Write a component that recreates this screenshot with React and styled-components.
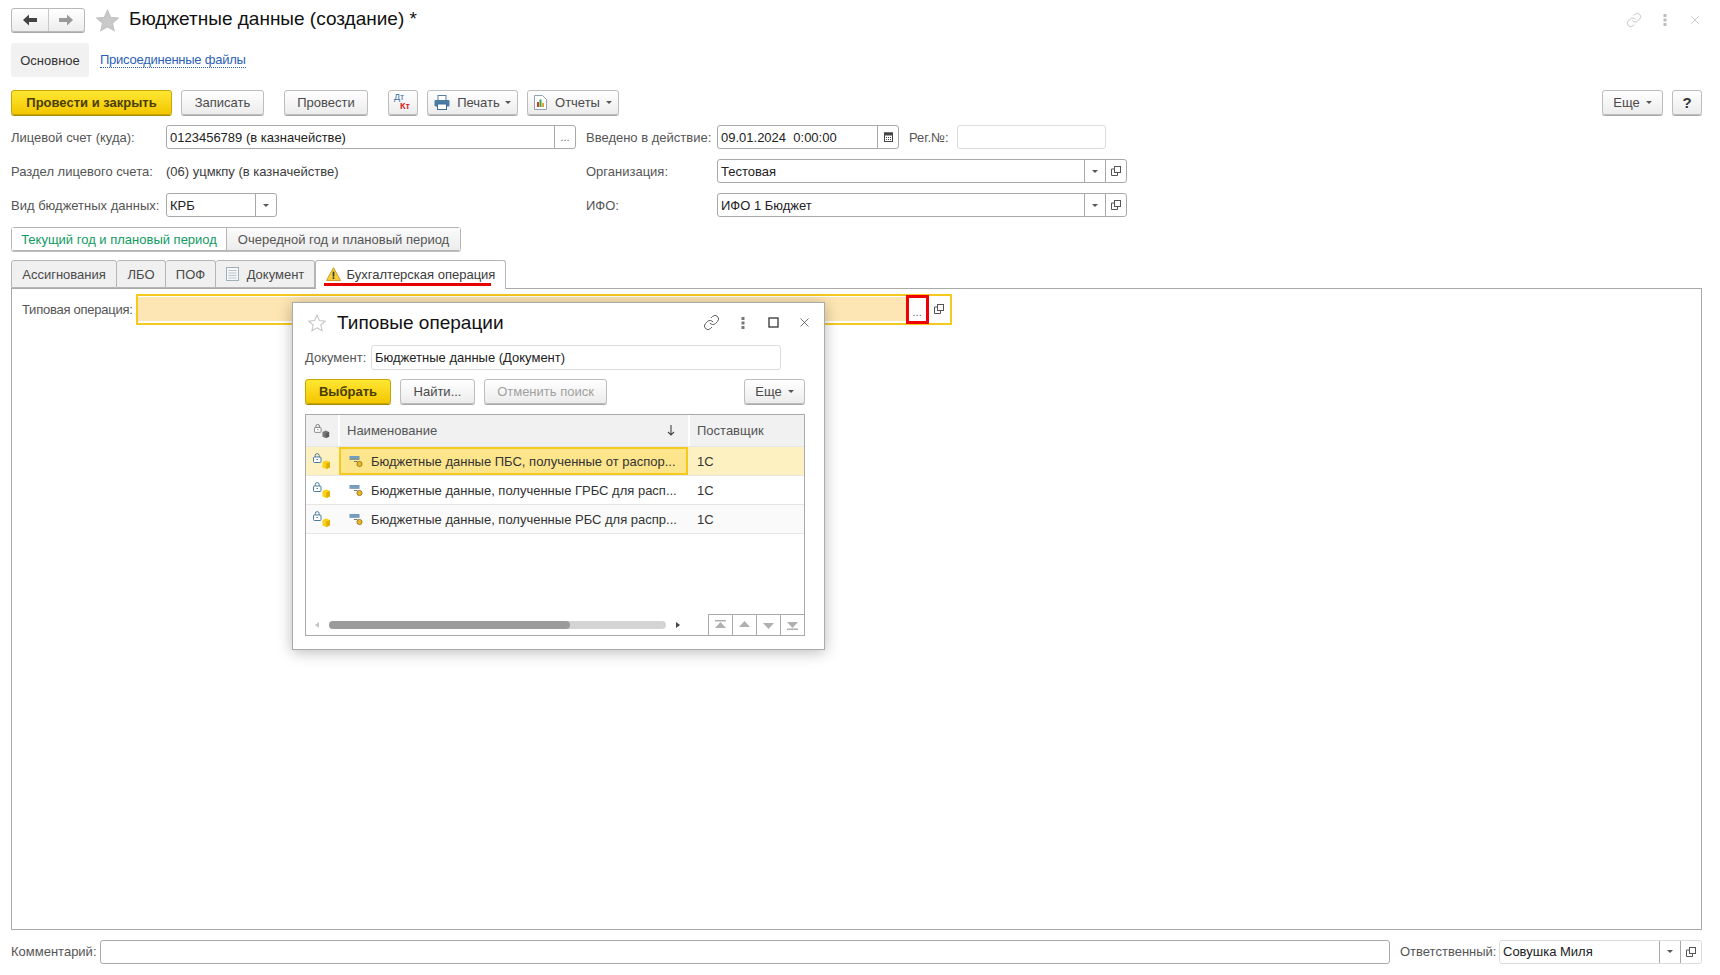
import React from 'react';
import styled, { createGlobalStyle } from 'styled-components';
import { Link as LinkIcon, X } from 'lucide-react';

const GlobalStyle = createGlobalStyle`
  html, body { margin: 0; padding: 0; background: #fff; }
  body {
    font-family: "Liberation Sans", Arial, sans-serif;
    font-size: 13px;
    color: #4a4a4a;
  }
  * { box-sizing: border-box; }
`;

const Page = styled.div`
  width: 1720px;
  height: 975px;
  padding: 8px 18px 0 11px;
  display: flex;
  flex-direction: column;
  overflow: hidden;
`;

const Header = styled.div`
  display: flex;
  align-items: center;
  height: 24px;
`;

const NavGroup = styled.div`
  display: flex;
  width: 74px;
  height: 24px;
  margin-right: 11px;
  border: 1px solid #b9b9b9;
  border-radius: 3px;
  box-shadow: 0 1px 0 #a8a8a8;
  background: linear-gradient(#fff, #ededed);
`;

const NavBtn = styled.div`
  flex: 1;
  display: flex;
  align-items: center;
  justify-content: center;
  & + & { border-left: 1px solid #c8c8c8; }
`;

const Title = styled.div`
  margin-left: 10px;
  padding-bottom: 2px;
  font-size: 19px;
  color: #111;
  white-space: nowrap;
`;

const HeaderTools = styled.div`
  margin-left: auto;
  display: flex;
  align-items: center;
  gap: 21px;
  color: #b8b8b8;
`;

const SectionRow = styled.div`
  display: flex;
  align-items: center;
  margin-top: 11px;
  height: 34px;
`;

const SectionActive = styled.div`
  width: 78px;
  height: 34px;
  display: flex;
  align-items: center;
  justify-content: center;
  background: #f1f1f1;
  border-radius: 3px;
  color: #333;
`;

const SectionLink = styled.a`
  margin-left: 11px;
  color: #2b5fb8;
  border-bottom: 1px dotted #2b5fb8;
  line-height: 14px;
  letter-spacing: -0.25px;
`;

const Toolbar = styled.div`
  display: flex;
  align-items: center;
  margin-top: ${p => p.$mt || 12}px;
  height: 26px;
`;

const Btn = styled.div`
  flex: none;
  width: ${p => p.$w}px;
  height: 25px;
  margin-left: ${p => p.$ml || 0}px;
  display: flex;
  align-items: center;
  justify-content: center;
  gap: ${p => p.$gap || 0}px;
  border: 1px solid ${p => (p.$primary ? '#c9a600' : '#bdbdbd')};
  border-radius: 3px;
  box-shadow: 0 1px 0 ${p => (p.$primary ? '#a98c00' : '#a8a8a8')};
  background: ${p => (p.$primary ? 'linear-gradient(#ffe733, #f3c600)' : 'linear-gradient(#fff, #ececec)')};
  color: ${p => (p.$primary ? '#4a3d00' : p.$disabled ? '#a0a0a0' : '#4a4a4a')};
  font-weight: ${p => (p.$primary ? 700 : 400)};
  white-space: nowrap;
`;

const HelpMark = styled.span`
  font-size: 15px;
  font-weight: 700;
  color: #333;
`;

const Caret = styled.span`
  display: inline-block;
  width: 0;
  height: 0;
  margin-left: ${p => p.$ml || 0}px;
  border-left: 3px solid transparent;
  border-right: 3px solid transparent;
  border-top: 3px solid #555;
`;

const Spacer = styled.div`
  flex: 1;
`;

const DebitCredit = styled.span`
  display: flex;
  flex-direction: column;
  width: 18px;
  font-size: 9px;
  line-height: 9px;
  font-weight: 700;
`;

const Debit = styled.span`
  color: #3a6ea5;
  font-weight: 400;
`;

const Credit = styled.span`
  color: #d8211b;
  margin-left: 6px;
`;

const Form = styled.div`
  display: flex;
  margin-top: 10px;
`;

const FormCol = styled.div`
  display: flex;
  flex-direction: column;
  gap: 10px;
  width: ${p => p.$w}px;
  margin-left: ${p => p.$ml || 0}px;
`;

const FormRow = styled.div`
  display: flex;
  align-items: center;
  height: 24px;
`;

const Label = styled.div`
  flex: none;
  width: ${p => (p.$w ? `${p.$w}px` : 'auto')};
  margin-left: ${p => p.$ml || 0}px;
  color: #555;
  white-space: nowrap;
  letter-spacing: ${p => (p.$tight ? '-0.25px' : 'normal')};
`;

const Value = styled.div`
  color: #3c3c3c;
`;

const Field = styled.div`
  flex: none;
  display: flex;
  width: ${p => p.$w}px;
  height: ${p => p.$h || 24}px;
  border: 1px solid ${p => (p.$light ? '#dcdcdc' : '#a9a9a9')};
  border-radius: 3px;
  background: #fff;
`;

const FieldText = styled.div`
  flex: 1;
  display: flex;
  align-items: center;
  padding-left: 3px;
  color: #222;
  white-space: pre;
`;

const FieldBtn = styled.div`
  flex: none;
  width: ${p => p.$w || 21}px;
  display: flex;
  align-items: center;
  justify-content: center;
  border-left: 1px solid #a9a9a9;
  color: #666;
  font-size: 11px;
`;

const Periods = styled.div`
  display: flex;
  width: 450px;
  height: 24px;
  margin-top: 10px;
  border: 1px solid #b5b5b5;
  border-radius: 3px;
  box-shadow: 0 1px 0 #bdbdbd;
`;

const Period = styled.div`
  display: flex;
  align-items: center;
  justify-content: center;
  width: ${p => p.$w}px;
  color: ${p => (p.$active ? '#0f9a5f' : '#555')};
  background: ${p => (p.$active ? '#fff' : 'linear-gradient(#fbfbfb, #ececec)')};
  & + & { border-left: 1px solid #b5b5b5; }
`;

const Tabs = styled.div`
  display: flex;
  height: 28px;
  margin-top: 9px;
  position: relative;
  z-index: 1;
`;

const Tab = styled.div`
  position: relative;
  display: flex;
  align-items: center;
  justify-content: center;
  gap: ${p => p.$gap || 6}px;
  width: ${p => p.$w}px;
  height: ${p => (p.$active ? 29 : 28)}px;
  padding-bottom: ${p => (p.$active ? 2 : 0)}px;
  border: 1px solid #b5b5b5;
  border-left-width: ${p => (p.$first || p.$active ? 1 : 0)}px;
  border-bottom: ${p => (p.$active ? 'none' : '1px solid #b5b5b5')};
  border-radius: 3px 3px 0 0;
  background: ${p => (p.$active ? '#fff' : '#f0f0f0')};
  color: ${p => (p.$active ? '#3c3c3c' : '#4a4a4a')};
`;

const RedUnderline = styled.div`
  position: absolute;
  left: 8px;
  bottom: 3px;
  width: 167px;
  height: 3px;
  background: #e60000;
`;

const Panel = styled.div`
  position: relative;
  flex: none;
  height: 642px;
  padding: 5px 0 0 10px;
  border: 1px solid #aaa;
`;

const TypicalRow = styled.div`
  display: flex;
  align-items: center;
  height: 31px;
`;

const TypicalFrame = styled.div`
  display: flex;
  align-items: stretch;
  width: 816px;
  height: 31px;
  margin-left: 3px;
  border: 2px solid #f6c91e;
`;

const TypicalInput = styled.div`
  flex: 1;
  margin: 1px 0 2px;
  background: #fde6b4;
`;

const RedBox = styled.div`
  flex: none;
  width: 23px;
  margin-top: -1px;
  margin-bottom: -1px;
  display: flex;
  align-items: center;
  justify-content: center;
  padding-top: 4px;
  border: 3px solid #f00000;
  background: #fff;
  color: #666;
  font-size: 11px;
`;

const OpenSlot = styled.div`
  flex: none;
  width: 21px;
  padding-bottom: 2px;
  display: flex;
  align-items: center;
  justify-content: center;
`;

const Dialog = styled.div`
  position: absolute;
  left: 280px;
  top: 13px;
  width: 533px;
  height: 348px;
  padding: 0 19px 0 12px;
  background: #fff;
  border: 1px solid #aaa;
  box-shadow: 0 2px 14px rgba(0, 0, 0, 0.28);
  z-index: 2;
`;

const DialogHeader = styled.div`
  display: flex;
  align-items: center;
  height: 42px;
  padding-bottom: 3px;
`;

const DialogStar = styled.span`
  display: flex;
  margin-left: 3px;
`;

const DialogTitle = styled.div`
  margin-left: 11px;
  font-size: 19px;
  color: #111;
`;

const DialogTools = styled.div`
  margin-left: auto;
  margin-right: -15px;
  display: flex;
  align-items: center;
  color: #444;
`;

const ToolSlot = styled.span`
  width: 31px;
  display: flex;
  align-items: center;
  justify-content: center;
`;

const Grid = styled.div`
  display: flex;
  flex-direction: column;
  width: 500px;
  height: 222px;
  margin-top: 10px;
  border: 1px solid #aaa;
`;

const GridRow = styled.div`
  display: grid;
  grid-template-columns: 32px 350px 1fr;
  flex: none;
  height: ${p => p.$h || 29}px;
  background: ${p => p.$bg || '#fff'};
  border-bottom: 1px solid #e6e6e6;
`;

const HeadCell = styled.div`
  display: flex;
  align-items: center;
  padding: 0 ${p => p.$padRight || 8}px 0 ${p => p.$pad || 8}px;
  background: #f1f1f1;
  color: #555;
  justify-content: ${p => (p.$between ? 'space-between' : 'flex-start')};
  & + & { border-left: 2px solid #fff; }
`;

const IconCell = styled.div`
  display: flex;
  align-items: center;
  justify-content: center;
`;

const NameCell = styled.div`
  display: flex;
  align-items: center;
  gap: 7px;
  min-width: 0;
  padding-left: 9px;
  margin-left: 1px;
  color: #333;
  background: ${p => (p.$current ? '#fde58c' : 'transparent')};
  outline: ${p => (p.$current ? '2px solid #f6c91e' : 'none')};
  outline-offset: -2px;
`;

const NameText = styled.span`
  white-space: nowrap;
`;

const CodeCell = styled.div`
  display: flex;
  align-items: center;
  padding-left: 9px;
  color: #333;
`;

const GridFooter = styled.div`
  margin-top: auto;
  display: flex;
  align-items: flex-end;
  height: 21px;
`;

const ScrollArea = styled.div`
  flex: 1;
  height: 21px;
  display: flex;
  align-items: center;
  padding-left: 9px;
  gap: 10px;
`;

const ScrollTrack = styled.div`
  width: 337px;
  height: 8px;
  border-radius: 4px;
  background: #d4d4d4;
`;

const ScrollThumb = styled.div`
  width: 241px;
  height: 8px;
  border-radius: 4px;
  background: #9b9b9b;
`;

const ScrollArrow = styled.span`
  width: 0;
  height: 0;
  border-top: 3px solid transparent;
  border-bottom: 3px solid transparent;
  ${p => (p.$left ? `border-right: 4px solid #c4c4c4;` : `border-left: 4px solid #444;`)}
`;

const PageNav = styled.div`
  display: flex;
  height: 21px;
  border-top: 1px solid #aaa;
`;

const PageNavBtn = styled.div`
  width: 24px;
  display: flex;
  align-items: center;
  justify-content: center;
  border-left: 1px solid #aaa;
`;

const Footer = styled.div`
  display: flex;
  align-items: center;
  height: 25px;
  margin-top: 9px;
`;

const Dots = ({ color = '#bdbdbd' }) => (
  <svg width="4" height="12" viewBox="0 0 4 12" fill={color}>
    <rect x="0.5" y="0" width="3" height="3" />
    <rect x="0.5" y="4.5" width="3" height="3" />
    <rect x="0.5" y="9" width="3" height="3" />
  </svg>
);

const StarIcon = ({ size, filled }) => (
  <svg width={size} height={size} viewBox="0 0 24 24">
    <path
      d="M12 1.5l3.2 7.2 7.8.8-5.9 5.2 1.7 7.7L12 18.4l-6.8 4 1.7-7.7L1 9.5l7.8-.8z"
      fill={filled ? '#c9c9c9' : '#fff'}
      stroke="#c4c4c4"
      strokeWidth="1.4"
    />
  </svg>
);

const ArrowLeft = () => (
  <svg width="14" height="12" viewBox="0 0 14 12">
    <path d="M0 6l6-5.5V4h8v4H6v3.5z" fill="#444" />
  </svg>
);

const ArrowRight = () => (
  <svg width="14" height="12" viewBox="0 0 14 12">
    <path d="M14 6L8 .5V4H0v4h8v3.5z" fill="#9a9a9a" />
  </svg>
);

const OpenIcon = () => (
  <svg width="10" height="10" viewBox="0 0 10 10" fill="none" stroke="#555">
    <rect x="3.5" y="0.5" width="6" height="6" />
    <path d="M3.5 3H.5v6.5h6V6.5" />
  </svg>
);

const PrinterIcon = () => (
  <svg width="16" height="15" viewBox="0 0 16 15">
    <rect x="4" y="0.5" width="8" height="5" fill="#fff" stroke="#5a7f9e" />
    <rect x="0.5" y="5" width="15" height="6.5" rx="1" fill="#4a7da6" />
    <rect x="3.5" y="9" width="9" height="5.5" fill="#fff" stroke="#3f6d92" />
  </svg>
);

const ReportIcon = () => (
  <svg width="13" height="15" viewBox="0 0 13 15">
    <path d="M.5.5h8l4 4v10H.5z" fill="#fff" stroke="#8fa3b3" />
    <rect x="3" y="7" width="2" height="5" fill="#d8372c" />
    <rect x="5.5" y="4.5" width="2" height="7.5" fill="#3ca24a" />
    <rect x="8" y="8" width="2" height="4" fill="#e0a92a" />
  </svg>
);

const CalendarIcon = () => (
  <svg width="9" height="10" viewBox="0 0 9 10">
    <rect x="0.5" y="1" width="8" height="8.5" fill="#fff" stroke="#444" />
    <rect x="0" y="0.5" width="9" height="3" fill="#444" />
    <path d="M2 5.5h1M4 5.5h1M6 5.5h1M2 7.5h1M4 7.5h1M6 7.5h1" stroke="#444" />
  </svg>
);

const WarningIcon = () => (
  <svg width="15" height="14" viewBox="0 0 16 15">
    <path d="M8 .7L15.5 14.4H.5z" fill="#f7cf3a" stroke="#c99a1a" strokeLinejoin="round" />
    <rect x="7.1" y="5" width="1.8" height="5.2" fill="#333" />
    <rect x="7.1" y="11" width="1.8" height="1.8" fill="#333" />
  </svg>
);

const DocIcon = () => (
  <svg width="13" height="14" viewBox="0 0 13 14">
    <rect x="0.5" y="0.5" width="12" height="13" fill="#f7f7f7" stroke="#9fb0bd" />
    <path d="M2.5 3.5h8M2.5 6h8M2.5 8.5h8M2.5 11h8" stroke="#b9c3cb" />
  </svg>
);

const LockCube = ({ gray }) => (
  <svg width="18" height="16" viewBox="0 0 18 16">
    <rect x="0.5" y="4" width="7.5" height="5.5" rx="1" fill="#fff" stroke={gray ? '#777' : '#4a7b9d'} />
    <path d="M2.2 4V2.6a2 2 0 014 0V4" fill="none" stroke={gray ? '#777' : '#4a7b9d'} />
    <path d="M3.5 6.5h1.5" stroke={gray ? '#777' : '#4a7b9d'} />
    <path d="M9.5 9l3.75-1.5L17 9v5.5L13.25 16 9.5 14.5z" fill={gray ? '#777' : '#f6d21a'} />
    <path d="M13.25 10.5V16L17 14.5V9z" fill={gray ? '#5c5c5c' : '#e0ad00'} />
  </svg>
);

const OperationIcon = () => (
  <svg width="16" height="14" viewBox="0 0 16 14">
    <rect x="1.5" y="2" width="10" height="2.6" fill="#6f9cc0" />
    <rect x="1.5" y="4.6" width="10" height="1" fill="#3f6d92" />
    <path d="M6 7.5h3.5" stroke="#777" />
    <circle cx="11.5" cy="10" r="2.6" fill="#eab92a" stroke="#8a6d10" strokeWidth="0.8" />
  </svg>
);

const SortArrow = () => (
  <svg width="8" height="11" viewBox="0 0 8 11" fill="none" stroke="#444" strokeWidth="1.1">
    <path d="M4 0v10M1 7l3 3 3-3" />
  </svg>
);

const PageIcon = ({ dir, bar }) => (
  <svg width="13" height="10" viewBox="0 0 13 10" fill="#b0b0b0">
    {dir === 'up' ? <path d={bar ? 'M6.5 2L12 8H1z' : 'M6.5 1L12 7H1z'} /> : <path d={bar ? 'M6.5 8L12 2H1z' : 'M6.5 9L12 3H1z'} />}
    {bar && <rect x="1" y={dir === 'up' ? 0 : 8.5} width="11" height="1.5" />}
  </svg>
);

const rows = [
  { name: 'Бюджетные данные ПБС, полученные от распор...', current: true },
  { name: 'Бюджетные данные, полученные ГРБС для расп...' },
  { name: 'Бюджетные данные, полученные РБС для распр...', bg: '#fafafa' },
];

export default function App() {
  return (
    <Page>
      <GlobalStyle />
      <Header>
        <NavGroup>
          <NavBtn><ArrowLeft /></NavBtn>
          <NavBtn><ArrowRight /></NavBtn>
        </NavGroup>
        <StarIcon size={23} filled />
        <Title>Бюджетные данные (создание) *</Title>
        <HeaderTools>
          <LinkIcon size={16} strokeWidth={1.2} />
          <Dots />
          <X size={14} strokeWidth={1.2} />
        </HeaderTools>
      </Header>

      <SectionRow>
        <SectionActive>Основное</SectionActive>
        <SectionLink>Присоединенные файлы</SectionLink>
      </SectionRow>

      <Toolbar>
        <Btn $primary $w={161}>Провести и закрыть</Btn>
        <Btn $w={83} $ml={9}>Записать</Btn>
        <Btn $w={84} $ml={20}>Провести</Btn>
        <Btn $w={30} $ml={20}>
          <DebitCredit>
            <Debit>Дт</Debit>
            <Credit>Кт</Credit>
          </DebitCredit>
        </Btn>
        <Btn $w={91} $ml={9} $gap={7}><PrinterIcon />Печать<Caret $ml={-2} /></Btn>
        <Btn $w={92} $ml={9} $gap={8}><ReportIcon />Отчеты<Caret $ml={-2} /></Btn>
        <Spacer />
        <Btn $w={61} $gap={6}>Еще<Caret /></Btn>
        <Btn $w={30} $ml={9}><HelpMark>?</HelpMark></Btn>
      </Toolbar>

      <Form>
        <FormCol $w={565}>
          <FormRow>
            <Label $w={155}>Лицевой счет (куда):</Label>
            <Field $w={410}>
              <FieldText>0123456789 (в казначействе)</FieldText>
              <FieldBtn>...</FieldBtn>
            </Field>
          </FormRow>
          <FormRow>
            <Label $w={155}>Раздел лицевого счета:</Label>
            <Value>(06) уцмкпу (в казначействе)</Value>
          </FormRow>
          <FormRow>
            <Label $w={155}>Вид бюджетных данных:</Label>
            <Field $w={111}>
              <FieldText>КРБ</FieldText>
              <FieldBtn><Caret /></FieldBtn>
            </Field>
          </FormRow>
        </FormCol>
        <FormCol $w={541} $ml={10}>
          <FormRow>
            <Label $w={131}>Введено в действие:</Label>
            <Field $w={182}>
              <FieldText>09.01.2024  0:00:00</FieldText>
              <FieldBtn><CalendarIcon /></FieldBtn>
            </Field>
            <Label $w={48} $ml={10}>Рег.№:</Label>
            <Field $w={149} $light />
          </FormRow>
          <FormRow>
            <Label $w={131}>Организация:</Label>
            <Field $w={410}>
              <FieldText>Тестовая</FieldText>
              <FieldBtn><Caret /></FieldBtn>
              <FieldBtn><OpenIcon /></FieldBtn>
            </Field>
          </FormRow>
          <FormRow>
            <Label $w={131}>ИФО:</Label>
            <Field $w={410}>
              <FieldText>ИФО 1 Бюджет</FieldText>
              <FieldBtn><Caret /></FieldBtn>
              <FieldBtn><OpenIcon /></FieldBtn>
            </Field>
          </FormRow>
        </FormCol>
      </Form>

      <Periods>
        <Period $active $w={215}>Текущий год и плановый период</Period>
        <Period $w={235}>Очередной год и плановый период</Period>
      </Periods>

      <Tabs>
        <Tab $first $w={106}>Ассигнования</Tab>
        <Tab $w={49}>ЛБО</Tab>
        <Tab $w={50}>ПОФ</Tab>
        <Tab $w={99} $gap={8}><DocIcon />Документ</Tab>
        <Tab $active $w={191}>
          <WarningIcon />Бухгалтерская операция
          <RedUnderline />
        </Tab>
      </Tabs>

      <Panel>
        <TypicalRow>
          <Label $tight>Типовая операция:</Label>
          <TypicalFrame>
            <TypicalInput />
            <RedBox>...</RedBox>
            <OpenSlot><OpenIcon /></OpenSlot>
          </TypicalFrame>
        </TypicalRow>

        <Dialog>
          <DialogHeader>
            <DialogStar><StarIcon size={18} /></DialogStar>
            <DialogTitle>Типовые операции</DialogTitle>
            <DialogTools>
              <ToolSlot><LinkIcon size={17} strokeWidth={1.2} /></ToolSlot>
              <ToolSlot><Dots color="#777" /></ToolSlot>
              <ToolSlot>
                <svg width="11" height="11" viewBox="0 0 11 11" fill="none" stroke="#333" strokeWidth="1.3">
                  <rect x="1" y="1" width="9" height="9" />
                </svg>
              </ToolSlot>
              <ToolSlot><X size={15} strokeWidth={1.2} /></ToolSlot>
            </DialogTools>
          </DialogHeader>

          <FormRow>
            <Label $w={66}>Документ:</Label>
            <Field $w={410} $h={25} $light>
              <FieldText>Бюджетные данные (Документ)</FieldText>
            </Field>
          </FormRow>

          <Toolbar $mt={9}>
            <Btn $primary $w={86}>Выбрать</Btn>
            <Btn $w={75} $ml={9}>Найти...</Btn>
            <Btn $w={123} $ml={9} $disabled>Отменить поиск</Btn>
            <Spacer />
            <Btn $w={61} $gap={6}>Еще<Caret /></Btn>
          </Toolbar>

          <Grid>
            <GridRow $h={32}>
              <HeadCell><LockCube gray /></HeadCell>
              <HeadCell $between $pad={7} $padRight={13}>Наименование<SortArrow /></HeadCell>
              <HeadCell $pad={7}>Поставщик</HeadCell>
            </GridRow>
            {rows.map(row => (
              <GridRow key={row.name} $bg={row.current ? '#fdf1c2' : row.bg}>
                <IconCell><LockCube /></IconCell>
                <NameCell $current={row.current}>
                  <OperationIcon />
                  <NameText>{row.name}</NameText>
                </NameCell>
                <CodeCell>1С</CodeCell>
              </GridRow>
            ))}
            <GridFooter>
              <ScrollArea>
                <ScrollArrow $left />
                <ScrollTrack><ScrollThumb /></ScrollTrack>
                <ScrollArrow />
              </ScrollArea>
              <PageNav>
                <PageNavBtn><PageIcon dir="up" bar /></PageNavBtn>
                <PageNavBtn><PageIcon dir="up" /></PageNavBtn>
                <PageNavBtn><PageIcon dir="down" /></PageNavBtn>
                <PageNavBtn><PageIcon dir="down" bar /></PageNavBtn>
              </PageNav>
            </GridFooter>
          </Grid>
        </Dialog>
      </Panel>

      <Footer>
        <Label $w={89}>Комментарий:</Label>
        <Field $w={1290} />
        <Label $w={99} $ml={10}>Ответственный:</Label>
        <Field $w={203} $light>
          <FieldText>Совушка Миля</FieldText>
          <FieldBtn><Caret /></FieldBtn>
          <FieldBtn><OpenIcon /></FieldBtn>
        </Field>
      </Footer>
    </Page>
  );
}
